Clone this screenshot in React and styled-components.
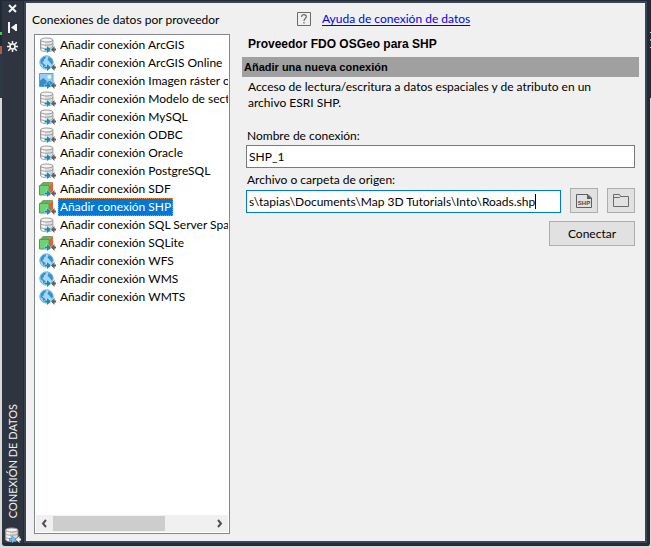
import React, { useState } from "react";
import styled, { createGlobalStyle, css } from "styled-components";

const GlobalStyle = createGlobalStyle`
  * { box-sizing: border-box; }
  body {
    margin: 0;
    background: #d9d9d9;
    color: #000;
    font: 12px/16px Lato, "Open Sans", sans-serif;
  }
  button, input { font: inherit; color: inherit; }
`;

const Screen = styled.div`
  display: flex;
  min-height: 100vh;
  padding-bottom: 2px;
`;

const Backdrop = styled.div`
  width: 2px;
  background: linear-gradient(
    #1e2a36 0 32px, #43c765 32px 35px, #1e2a36 35px 46px,
    #a8614c 46px 54px, #2c3a48 54px 98px, #d9d9d9 98px
  );
`;

const RightBackdrop = styled.div`
  width: 1px;
  background: linear-gradient(
    #232a3a 0 32px, #d9d9d9 32px 33px, #232a3a 33px 39px, #5ab4e8 39px 41px,
    #232a3a 41px 47px, #d9d9d9 47px 48px, #232a3a 48px 98px, #d9d9d9 98px
  );
`;

const Palette = styled.section`
  flex: 1;
  min-width: 0;
  display: flex;
  background: #2e3541;
  border: solid #212a36;
  border-width: 1px 3px 3px 0;
  border-radius: 0 0 3px 3px;
`;

const Rail = styled.div`
  width: 22px;
  display: flex;
  flex-direction: column;
  align-items: center;
  border-right: 1px solid #212a36;
`;

const RailButton = styled.button`
  width: 19px;
  height: 19px;
  padding: 0;
  display: grid;
  place-items: center;
  border: 0;
  background: none;
  &:first-child { height: 15px; margin-bottom: 2px; }
`;

const RailTitle = styled.h1`
  margin: auto 0 9px;
  color: #f0f0f0;
  font-size: 11px;
  line-height: 18px;
  font-weight: 400;
  white-space: nowrap;
  writing-mode: vertical-rl;
  transform: rotate(180deg);
`;

const Content = styled.main`
  flex: 1;
  min-width: 0;
  display: flex;
  gap: 12px;
  padding: 0 6px 7px 8px;
  background: #f0f0f0;
  border: 2px solid #3b4552;
`;

const Providers = styled.section`
  flex: 0 0 196px;
  min-width: 0;
  display: flex;
  flex-direction: column;
`;

const ProvidersTitle = styled.h2`
  margin: 9px 0 6px -2px;
  font-size: 12px;
  line-height: 16px;
  font-weight: 400;
  white-space: nowrap;
`;

const ListBox = styled.div`
  flex: 1;
  display: flex;
  flex-direction: column;
  padding: 1px;
  background: #fff;
  border: 1px solid #828790;
`;

const List = styled.ul`
  flex: 1;
  margin: 0;
  padding: 0 0 0 3px;
  list-style: none;
  overflow: hidden;
`;

const Item = styled.li`
  display: flex;
  align-items: center;
  gap: 2px;
  height: 18px;
  svg { flex: none; }
`;

const ItemButton = styled.button`
  height: 18px;
  padding: 0 1px;
  border: 1px solid transparent;
  background: none;
  line-height: 16px;
  white-space: nowrap;
  ${(p) =>
    p.$selected &&
    css`
      background: #0078d7;
      border: 1px dotted #ff8728;
      outline: 0;
      color: #fff;
    `}
`;

const ScrollBar = styled.div`
  display: flex;
  height: 17px;
  background: #f0f0f0;
`;

const ScrollArrow = styled.button`
  width: 17px;
  padding: 0;
  display: grid;
  place-items: center;
  border: 0;
  background: none;
`;

const ScrollTrack = styled.div`
  flex: 1;
  padding: 1px 0;
`;

const ScrollThumb = styled.div`
  width: 71%;
  height: 100%;
  background: #cdcdcd;
`;

const Details = styled.section`
  flex: 1;
  min-width: 0;
`;

const HelpRow = styled.div`
  display: flex;
  align-items: center;
  gap: 11px;
  margin: 8px 0 9px 55px;
`;

const HelpLink = styled.a`
  color: #0000f0;
  text-decoration: underline;
  text-underline-offset: 2px;
`;

const ProviderName = styled.h2`
  margin: 0 6px 5px;
  font: bold 12px/16px "Liberation Sans", Arial, sans-serif;
`;

const SectionBar = styled.h3`
  margin: 0;
  padding: 2px;
  background: #a0a0a0;
  font: bold 11px/16px "Liberation Sans", Arial, sans-serif;
`;

const Description = styled.p`
  margin: 2px 6px 17px;
  max-width: 360px;
`;

const Form = styled.form`
  display: flex;
  flex-direction: column;
  padding: 0 4px;
`;

const Label = styled.label`
  padding-left: 1px;
`;

const Field = styled.div`
  flex: ${(p) => (p.$grow ? 1 : "none")};
  min-width: 0;
  height: 23px;
  display: flex;
  align-items: center;
  padding: 0 2px;
  overflow: hidden;
  background: #fff;
  border: 1px solid ${(p) => (p.$active ? "#0078d7" : "#7a7a7a")};
`;

const TextInput = styled.input`
  min-width: 0;
  width: ${(p) => (p.$fit ? "auto" : "100%")};
  field-sizing: ${(p) => (p.$fit ? "content" : "fixed")};
  height: 18px;
  padding: 0;
  border: 0;
  outline: 0;
  background: none;
`;

const Caret = styled.span`
  flex: none;
  width: 1px;
  height: 15px;
  background: #000;
`;

const NameField = styled(Field)`
  margin: 1px 0 4px;
`;

const SourceRow = styled.div`
  display: flex;
  align-items: flex-end;
  gap: 9px;
  margin-bottom: 8px;
`;

const PushButton = styled.button`
  display: grid;
  place-items: center;
  width: ${(p) => (p.$wide ? "86px" : "28px")};
  height: 25px;
  padding: 0;
  align-self: ${(p) => (p.$wide ? "flex-end" : "auto")};
  background: #e1e1e1;
  border: 1px solid #adadad;
`;

const Arrows = ({ light }) => (
  <g stroke={light ? "#2e3541" : "#fff"} strokeWidth=".6" paintOrder="stroke">
    <path d="M5.500 11.500H8V9l4 3.500L8 16v-2.500H5.500z" fill={light ? "#6cc0f5" : "#0a8fc4"} />
    <path d="M17 11.500h-1.500V9l-3.500 3.500 3.500 3.500v-2.500H17z" fill={light ? "#f4f4f4" : "#5c5f63"} />
  </g>
);

const Database = ({ light }) => (
  <>
    <path d="M1.500 3v9.500c0 1.200 2.900 2.200 6.200 2.200s6.200-1 6.200-2.200V3z" fill="#dedede" stroke="#999" />
    <path d="M3 5v8.500l3 .5V5z" fill="#f5f5f5" />
    <path d="M1.500 6.800C3 8.700 12.500 8.700 13.900 6.800M1.500 10.200c1.500 1.900 11 1.900 12.400 0" fill="none" stroke="#8c8c8c" strokeWidth=".8" />
    <ellipse cx="7.700" cy="3" rx="6.200" ry="2" fill="#f4f4f4" stroke="#999" />
    <Arrows light={light} />
  </>
);

const Globe = () => (
  <>
    <circle cx="7.500" cy="7.500" r="6.700" fill="#a5d6f5" stroke="#5fb2e2" />
    <path d="M1.800 5 4 2.200 7 1.500 6.500 3.500 4.800 4.500 5 6 3.200 7.200 4.500 8.800 6.500 10 6 13.500 4.200 12 3.500 9.500 1.500 8zM9.500 2l3 1.800L14 7l-1 2.500-1.500-1.500L10 6 8.500 5z" fill="#3492cb" />
    <Arrows />
  </>
);

const Picture = () => (
  <>
    <path d="M.5.500h13.500v13H.5z" fill="#91cffa" />
    <path d="M.5 13.500V8L4.500 5l4 4L11 7.800l3 2.500v3.200z" fill="#318fc9" />
    <circle cx="10.300" cy="3.800" r="1.900" fill="#fff2b5" />
    <path d="M.5.500h13.500v13H.5z" fill="none" stroke="#4ba5dc" />
    <Arrows />
  </>
);

const Cube = () => (
  <>
    <path d="M.5 4.500 4 1h10L10 4.500z" fill="#74a765" />
    <path d="M10 4.500 14 1v10.500l-4 3.500z" fill="#df6335" />
    <path d="M.5 4.500H10v9.500H.5z" fill="#6ad472" stroke="#45a458" />
    <Arrows />
  </>
);

const glyphs = { db: Database, globe: Globe, image: Picture, cube: Cube };

const ProviderIcon = ({ kind, light }) => {
  const Glyph = glyphs[kind];
  return (
    <svg width="17" height="16" viewBox="0 0 17 16" aria-hidden="true">
      <Glyph light={light} />
    </svg>
  );
};

const RailIcon = ({ children }) => (
  <svg width="11" height="11" viewBox="0 0 11 11" fill="none" stroke="#f3f3f3" aria-hidden="true">
    {children}
  </svg>
);

const Chevron = ({ d }) => (
  <svg width="9" height="9" viewBox="0 0 9 9" fill="none" stroke="#505050" strokeWidth="2" aria-hidden="true">
    <path d={d} />
  </svg>
);

const providers = [
  ["ArcGIS", "db"],
  ["ArcGIS Online", "globe"],
  ["Imagen ráster o", "image"],
  ["Modelo de sect", "db"],
  ["MySQL", "db"],
  ["ODBC", "db"],
  ["Oracle", "db"],
  ["PostgreSQL", "db"],
  ["SDF", "cube"],
  ["SHP", "cube"],
  ["SQL Server Spa", "db"],
  ["SQLite", "cube"],
  ["WFS", "globe"],
  ["WMS", "globe"],
  ["WMTS", "globe"],
];

export default function App() {
  const [selected, setSelected] = useState("SHP");
  const [name, setName] = useState("SHP_1");
  const [source, setSource] = useState("s\\tapias\\Documents\\Map 3D Tutorials\\Into\\Roads.shp");

  return (
    <>
      <GlobalStyle />
      <Screen>
        <Backdrop />
        <Palette>
          <Rail>
            <RailButton aria-label="Cerrar">
              <RailIcon><path d="M2 2l7 7M9 2l-7 7" strokeWidth="2" /></RailIcon>
            </RailButton>
            <RailButton aria-label="Ocultar automáticamente">
              <RailIcon>
                <path d="M2 0v11M9 2v7" strokeWidth="2" />
                <path d="M4 5.500 9 2v7z" fill="#f3f3f3" stroke="none" />
              </RailIcon>
            </RailButton>
            <RailButton aria-label="Propiedades">
              <RailIcon>
                <circle cx="5.500" cy="5.500" r="2.500" strokeWidth="1.500" />
                <path d="M5.500 0v3M5.500 8v3M0 5.500h3M8 5.500h3M1.200 1.200l2.300 2.300M7.500 7.500l2.300 2.300M9.800 1.200 7.500 3.500M3.500 7.500 1.200 9.800" strokeWidth="1.500" />
              </RailIcon>
            </RailButton>
            <RailTitle>CONEXIÓN DE DATOS</RailTitle>
            <ProviderIcon kind="db" light />
          </Rail>
          <Content>
            <Providers>
              <ProvidersTitle>Conexiones de datos por proveedor</ProvidersTitle>
              <ListBox>
                <List>
                  {providers.map(([label, kind]) => (
                    <Item key={label}>
                      <ProviderIcon kind={kind} />
                      <ItemButton
                        $selected={label === selected}
                        aria-pressed={label === selected}
                        onClick={() => setSelected(label)}
                      >
                        Añadir conexión {label}
                      </ItemButton>
                    </Item>
                  ))}
                </List>
                <ScrollBar>
                  <ScrollArrow aria-label="Desplazar a la izquierda"><Chevron d="M6 1 3 4.500 6 8" /></ScrollArrow>
                  <ScrollTrack><ScrollThumb /></ScrollTrack>
                  <ScrollArrow aria-label="Desplazar a la derecha"><Chevron d="M3 1l3 3.500L3 8" /></ScrollArrow>
                </ScrollBar>
              </ListBox>
            </Providers>
            <Details>
              <HelpRow>
                <svg width="14" height="14" viewBox="0 0 14 14" fill="none" stroke="#6a6a6a" aria-hidden="true">
                  <path d="M.5.500h13v13H.5z" />
                  <path d="M4.700 5V4.500C4.700 2 9.300 2 9.300 4.700 9.300 6.500 7 6.500 7 9M7 10v1.500" strokeWidth="1.200" />
                </svg>
                <HelpLink href="#ayuda">Ayuda de conexión de datos</HelpLink>
              </HelpRow>
              <ProviderName>Proveedor FDO OSGeo para SHP</ProviderName>
              <SectionBar>Añadir una nueva conexión</SectionBar>
              <Description>
                Acceso de lectura/escritura a datos espaciales y de atributo en un archivo ESRI SHP.
              </Description>
              <Form onSubmit={(e) => e.preventDefault()}>
                <Label htmlFor="nombre">Nombre de conexión:</Label>
                <NameField>
                  <TextInput id="nombre" value={name} onChange={(e) => setName(e.target.value)} />
                </NameField>
                <Label htmlFor="origen">Archivo o carpeta de origen:</Label>
                <SourceRow>
                  <Field $grow $active>
                    <TextInput $fit id="origen" value={source} onChange={(e) => setSource(e.target.value)} />
                    <Caret />
                  </Field>
                  <PushButton type="button" aria-label="Elegir archivo SHP">
                    <svg width="16" height="14" viewBox="0 0 16 14" fill="none" stroke="#5f5f5f" aria-hidden="true">
                      <path d="M.5.500H12l3.500 3.500v9.500H.5z" />
                      <path d="M11 0l5 5h-5z" fill="#5f5f5f" stroke="none" />
                      <text x="8" y="11" textAnchor="middle" fill="#4a4a4a" stroke="none" fontFamily="Liberation Sans" fontWeight="700" fontSize="6">SHP</text>
                    </svg>
                  </PushButton>
                  <PushButton type="button" aria-label="Elegir carpeta">
                    <svg width="16" height="14" viewBox="0 0 16 14" fill="none" stroke="#6a6a6a" aria-hidden="true">
                      <path d="M.5 12.500V.500h6l1 2h8v10z" />
                      <path d="M.5 3.500h6l1-1" />
                    </svg>
                  </PushButton>
                </SourceRow>
                <PushButton $wide type="submit">Conectar</PushButton>
              </Form>
            </Details>
          </Content>
        </Palette>
        <RightBackdrop />
      </Screen>
    </>
  );
}
